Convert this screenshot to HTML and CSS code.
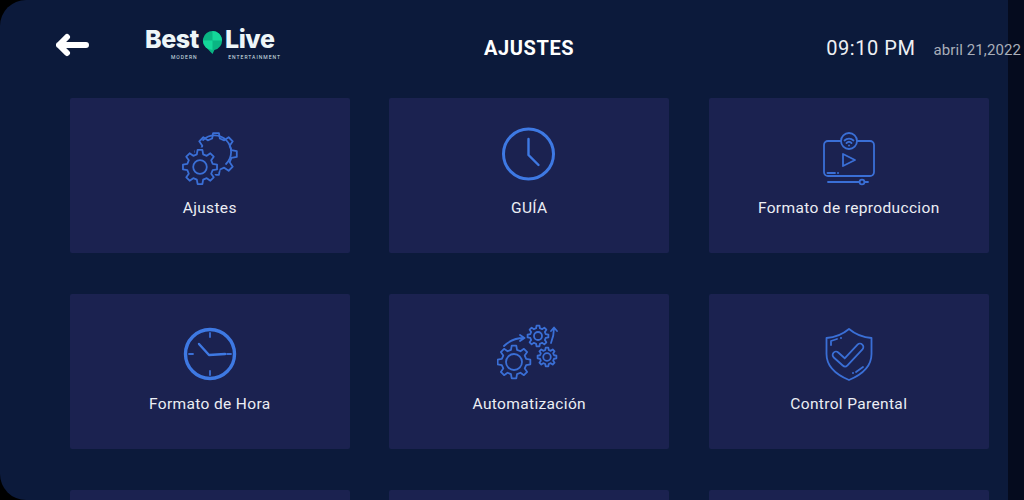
FILE: index.html
```html
<!DOCTYPE html>
<html>
<head>
<meta charset="utf-8">
<title>Ajustes</title>
<link rel="stylesheet" href="styles.css">
</head>
<body>

<svg class="defs" width="0" height="0">
  <defs>
    <path id="gear" d="M-1.84 -7.37L-1.39 -9.9L1.39 -9.9L1.84 -7.37L3.91 -6.51L6.02 -7.98L7.98 -6.02L6.51 -3.91L7.37 -1.84L9.9 -1.39L9.9 1.39L7.37 1.84L6.51 3.91L7.98 6.02L6.02 7.98L3.91 6.51L1.84 7.37L1.39 9.9L-1.39 9.9L-1.84 7.37L-3.91 6.51L-6.02 7.98L-7.98 6.02L-6.51 3.91L-7.37 1.84L-9.9 1.39L-9.9 -1.39L-7.37 -1.84L-6.51 -3.91L-7.98 -6.02L-6.02 -7.98L-3.91 -6.51Z"/>
  </defs>
</svg>

<div class="screen">
  <header class="top">
    <svg class="back" viewBox="0 0 33 24">
      <path d="M11 4L3 12L11 20M3 12H30"/>
    </svg>
    <div class="logo">
      <div class="logo-main">
        <span>Best</span>
        <svg class="pin" viewBox="0 0 22 26">
          <path class="pin-dark" d="M11 1A10 10 0 0 0 6 19.7L11 25L13 20.8A10 10 0 0 0 11 1Z"/>
          <path class="pin-light" d="M11 1A10 10 0 0 1 21 11H11Z"/>
          <path class="pin-light" d="M1 11H11V20.9A10 10 0 0 1 1 11Z"/>
        </svg>
        <span>Live</span>
      </div>
      <div class="logo-sub">
        <span>MODERN</span>
        <span>ENTERTAINMENT</span>
      </div>
    </div>
    <h1 class="title">AJUSTES</h1>
    <div class="time">09:10 PM</div>
    <div class="date">abril 21,2022</div>
  </header>

  <main class="grid">
    <a class="card">
      <svg class="icon" viewBox="0 0 64 64">
        <use href="#gear" transform="translate(38 28) scale(2.1)"/>
        <path d="M25 14A15 15 0 0 1 48 38" class="thin"/>
        <use href="#gear" class="halo" transform="translate(22 41) scale(1.72)"/>
        <use href="#gear" class="solid" transform="translate(22 41) scale(1.72)"/>
        <circle cx="22" cy="41" r="6.8"/>
      </svg>
      <span class="label">Ajustes</span>
    </a>
    <a class="card">
      <svg class="icon" viewBox="0 0 64 64">
        <circle class="heavy" cx="31.5" cy="28" r="25"/>
        <path class="hand" d="M31.5 13V29L41.5 39"/>
      </svg>
      <span class="label">GUÍA</span>
    </a>
    <a class="card">
      <svg class="icon" viewBox="0 0 64 64">
        <rect x="7" y="15" width="50" height="35" rx="4"/>
        <circle class="solid" cx="32" cy="15" r="8"/>
        <path d="M27.5 14.5A6.5 6.5 0 0 1 36.5 14.5M29.5 17A3.6 3.6 0 0 1 34.5 17"/>
        <circle class="dot" cx="32" cy="19.5" r="1"/>
        <path d="M26 28L38 34L26 40Z"/>
        <path d="M10.5 47H18"/>
        <circle class="dot" cx="21" cy="47" r="1"/>
        <path d="M11 56H51"/>
        <circle class="solid" cx="45" cy="56" r="2.4"/>
      </svg>
      <span class="label">Formato de reproduccion</span>
    </a>

    <a class="card">
      <svg class="icon" viewBox="0 0 64 64">
        <circle class="heavy wide" cx="32" cy="32" r="24.5"/>
        <path d="M32 11V15M32 49V53M11 32H15M49 32H53"/>
        <path class="hand" d="M21 22L31 33L47 32"/>
      </svg>
      <span class="label">Formato de Hora</span>
    </a>
    <a class="card">
      <svg class="icon" viewBox="0 0 64 64">
        <use href="#gear" transform="translate(17 40) scale(1.65)"/>
        <circle cx="17" cy="40" r="8"/>
        <use href="#gear" transform="translate(41 14) scale(1.05)"/>
        <circle cx="41" cy="14" r="4"/>
        <use href="#gear" transform="translate(50 35) scale(0.95)"/>
        <circle cx="50" cy="35" r="3.8"/>
        <path d="M7 24C12 19 19 16 27 16M23 13L27.5 16L23 19"/>
        <path d="M54 21C56 16 57 11 57 6M54 9L57 5.5L60 9"/>
      </svg>
      <span class="label">Automatización</span>
    </a>
    <a class="card">
      <svg class="icon" viewBox="0 0 64 64">
        <path d="M32 7C26 12 18 15.5 9.5 16V32C9.5 45 20 53 32 58C44 53 54.5 45 54.5 32V16C46 15.5 38 12 32 7Z"/>
        <path class="check-out" d="M19 33L28 41L43 25"/>
        <path class="check-in" d="M19 33L28 41L43 25"/>
        <path d="M14 23V19L20 17M39 50L46 45"/>
        <circle class="dot" cx="24" cy="16" r="1"/>
        <circle class="dot" cx="36" cy="51" r="1"/>
      </svg>
      <span class="label">Control Parental</span>
    </a>

    <a class="card"></a>
    <a class="card"></a>
    <a class="card"></a>
  </main>

  <div class="edge"></div>
</div>

</body>
</html>
```

FILE: styles.css
```css
html, body {
  margin: 0;
  height: 100%;
  background-color: black;
}

.defs {
  position: absolute;
}

#gear {
  vector-effect: non-scaling-stroke;
}

.screen {
  position: relative;
  width: 1024px;
  height: 500px;
  overflow: hidden;
  border-radius: 26px 0 0 26px;
  background-color: #0c1a3b;
  font-family: Roboto, "Liberation Sans", sans-serif;
  color: white;
}

.top {
  position: relative;
  z-index: 1;
  display: flex;
  align-items: center;
  height: 98px;
  padding-left: 56px;
  box-sizing: border-box;
  white-space: nowrap;
}

.back {
  flex: none;
  width: 33px;
  height: 24px;
  margin-top: -8px;
  fill: none;
  stroke: white;
  stroke-width: 6;
  stroke-linecap: round;
  stroke-linejoin: round;
}

.logo {
  flex: none;
  width: 136px;
  margin-left: 56px;
  margin-top: -15px;
}

.logo-main {
  display: flex;
  align-items: center;
  font-family: Inter, "Liberation Sans", sans-serif;
  font-weight: 800;
  font-size: 25px;
  line-height: 26px;
  letter-spacing: -0.4px;
  color: #eef6f8;
}

.pin {
  width: 21px;
  height: 25px;
  margin: 6px 2px 0 3px;
}

.pin-dark {
  fill: #0ab583;
}

.pin-light {
  fill: #14d79a;
}

.logo-sub {
  display: flex;
  justify-content: space-between;
  margin-top: -1px;
  padding-left: 26px;
  font-size: 5px;
  line-height: 6px;
  letter-spacing: 1px;
  color: #dbe3ea;
}

.title {
  flex: none;
  margin: -2px 0 0 203px;
  font-size: 20px;
  font-weight: 700;
  letter-spacing: 0.6px;
}

.time {
  flex: none;
  margin: -2px 0 0 252px;
  font-size: 20px;
  letter-spacing: 0.55px;
  color: #eef0f4;
}

.date {
  flex: none;
  margin: 2px 0 0 18px;
  font-size: 15px;
  letter-spacing: 0.1px;
  color: #a9aeb9;
}

.grid {
  display: grid;
  grid-template-columns: repeat(3, 280px);
  grid-auto-rows: 155px;
  column-gap: 39.5px;
  row-gap: 41px;
  padding-left: 69.75px;
}

.card {
  display: flex;
  flex-direction: column;
  align-items: center;
  padding-top: 28px;
  box-sizing: border-box;
  border-radius: 2px;
  background-color: #1b2250;
}

.label {
  margin-top: 9px;
  font-size: 15.5px;
  line-height: 18px;
  letter-spacing: 0.35px;
  color: #eceef4;
}

.icon {
  width: 64px;
  height: 64px;
  fill: none;
  stroke: #3a6fd6;
  stroke-width: 1.8;
  stroke-linecap: round;
  stroke-linejoin: round;
}

.icon .solid {
  fill: #1b2250;
}

.icon .halo {
  fill: #1b2250;
  stroke: #1b2250;
  stroke-width: 5;
}

.icon .dot {
  fill: #3a6fd6;
  stroke: none;
}

.icon .heavy {
  stroke: #3e79e3;
  stroke-width: 3;
}

.icon .wide {
  stroke-width: 3.4;
}

.icon .hand {
  stroke: #3e79e3;
  stroke-width: 2.4;
}

.icon .check-out {
  stroke-width: 8.5;
}

.icon .check-in {
  stroke: #1b2250;
  stroke-width: 5;
}

.edge {
  position: absolute;
  top: 0;
  right: 0;
  bottom: 0;
  width: 16px;
  background-color: #050b1e;
}
```
